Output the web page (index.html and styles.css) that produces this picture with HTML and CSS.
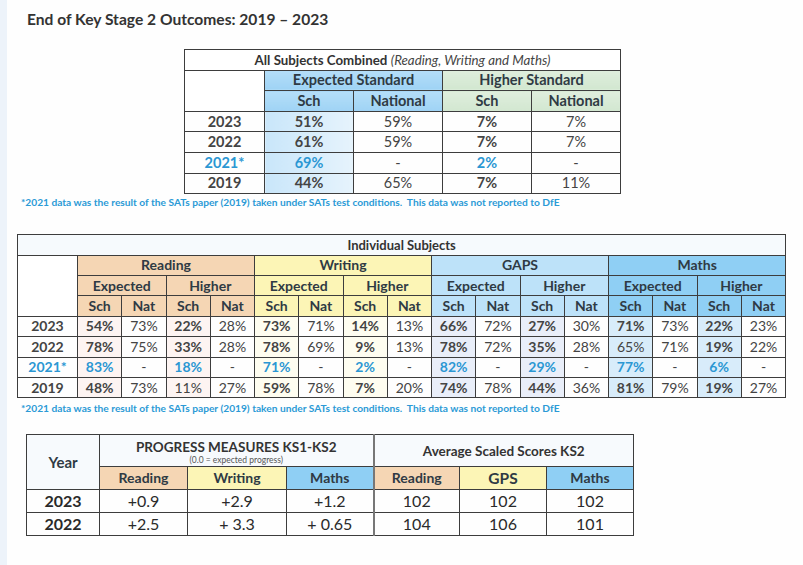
FILE: index.html
```html
<!DOCTYPE html>
<html>
<head>
<meta charset="utf-8">
<link rel="stylesheet" href="styles.css">
</head>
<body>
<div class="page">
  <h1 class="title">End of Key Stage 2 Outcomes: 2019 – 2023</h1>

  <table class="t1">
    <colgroup><col class="c-yr"><col class="c-v"><col class="c-v"><col class="c-v"><col class="c-v"></colgroup>
    <tr><td colspan="5" class="ttl"><b>All Subjects Combined</b> <i>(Reading, Writing and Maths)</i></td></tr>
    <tr><td rowspan="2" class="blank"></td><th colspan="2" class="exp">Expected Standard</th><th colspan="2" class="hig">Higher Standard</th></tr>
    <tr><th class="exp">Sch</th><th class="exp">National</th><th class="hig">Sch</th><th class="hig">National</th></tr>
    <tr><td class="yr">2023</td><td class="b tintb">51%</td><td>59%</td><td class="b">7%</td><td>7%</td></tr>
    <tr><td class="yr">2022</td><td class="b tintb">61%</td><td>59%</td><td class="b">7%</td><td>7%</td></tr>
    <tr class="blue"><td class="yr">2021*</td><td class="b tintb">69%</td><td>-</td><td class="b">2%</td><td>-</td></tr>
    <tr><td class="yr">2019</td><td class="b tintb">44%</td><td>65%</td><td class="b">7%</td><td>11%</td></tr>
  </table>
  <p class="note note1">*2021 data was the result of the SATs paper (2019) taken under SATs test conditions.  This data was not reported to DfE</p>

  <table class="t2">
    <colgroup><col class="c-yr2"><col span="16" class="c-v2"></colgroup>
    <tr><td colspan="17" class="ttl2"><b>Individual Subjects</b></td></tr>
    <tr><td rowspan="3" class="blank"></td>
      <th colspan="4" class="rd">Reading</th><th colspan="4" class="wr">Writing</th><th colspan="4" class="gp">GAPS</th><th colspan="4" class="ma">Maths</th></tr>
    <tr>
      <th colspan="2" class="rd">Expected</th><th colspan="2" class="rd">Higher</th>
      <th colspan="2" class="wr">Expected</th><th colspan="2" class="wr">Higher</th>
      <th colspan="2" class="gp">Expected</th><th colspan="2" class="gp">Higher</th>
      <th colspan="2" class="ma">Expected</th><th colspan="2" class="ma">Higher</th></tr>
    <tr>
      <th class="rd">Sch</th><th class="rd">Nat</th><th class="rd">Sch</th><th class="rd">Nat</th>
      <th class="wr">Sch</th><th class="wr">Nat</th><th class="wr">Sch</th><th class="wr">Nat</th>
      <th class="gp">Sch</th><th class="gp">Nat</th><th class="gp">Sch</th><th class="gp">Nat</th>
      <th class="ma">Sch</th><th class="ma">Nat</th><th class="ma">Sch</th><th class="ma">Nat</th></tr>
    <tr><td class="yr">2023</td>
      <td class="b tr">54%</td><td>73%</td><td class="b tr">22%</td><td>28%</td>
      <td class="b tw">73%</td><td>71%</td><td class="b tw">14%</td><td>13%</td>
      <td class="b tg">66%</td><td>72%</td><td class="b tg">27%</td><td>30%</td>
      <td class="b tm">71%</td><td>73%</td><td class="b tm">22%</td><td>23%</td></tr>
    <tr><td class="yr">2022</td>
      <td class="b tr">78%</td><td>75%</td><td class="b tr">33%</td><td>28%</td>
      <td class="b tw">78%</td><td>69%</td><td class="b tw">9%</td><td>13%</td>
      <td class="b tg">78%</td><td>72%</td><td class="b tg">35%</td><td>28%</td>
      <td class="tm">65%</td><td>71%</td><td class="b tm">19%</td><td>22%</td></tr>
    <tr class="blue"><td class="yr">2021*</td>
      <td class="b tr">83%</td><td>-</td><td class="b tr">18%</td><td>-</td>
      <td class="b tw">71%</td><td>-</td><td class="b tw">2%</td><td>-</td>
      <td class="b tg">82%</td><td>-</td><td class="b tg">29%</td><td>-</td>
      <td class="b tm">77%</td><td>-</td><td class="b tm">6%</td><td>-</td></tr>
    <tr><td class="yr">2019</td>
      <td class="b tr">48%</td><td>73%</td><td class="tr">11%</td><td>27%</td>
      <td class="b tw">59%</td><td>78%</td><td class="b tw">7%</td><td>20%</td>
      <td class="b tg">74%</td><td>78%</td><td class="b tg">44%</td><td>36%</td>
      <td class="b tm">81%</td><td>79%</td><td class="b tm">19%</td><td>27%</td></tr>
  </table>
  <p class="note note2">*2021 data was the result of the SATs paper (2019) taken under SATs test conditions.  This data was not reported to DfE</p>

  <table class="t3">
    <colgroup><col class="w73"><col class="w88"><col class="w99"><col class="w87"><col class="w86"><col class="w87"><col class="w87"></colgroup>
    <tr class="h1">
      <th rowspan="2" class="yearh">Year</th>
      <th colspan="3" class="pm"><span class="pmt">PROGRESS MEASURES KS1-KS2</span><span class="pms">(0.0 = expected progress)</span></th>
      <th colspan="3" class="ass">Average Scaled Scores KS2</th></tr>
    <tr class="h2">
      <th class="rd">Reading</th><th class="wr">Writing</th><th class="ma sep">Maths</th>
      <th class="rd">Reading</th><th class="wr gps">GPS</th><th class="ma">Maths</th></tr>
    <tr class="dr"><td class="yr">2023</td><td>+0.9</td><td>+2.9</td><td class="sep">+1.2</td><td>102</td><td>102</td><td>102</td></tr>
    <tr class="dr"><td class="yr">2022</td><td>+2.5</td><td>+ 3.3</td><td class="sep">+ 0.65</td><td>104</td><td>106</td><td>101</td></tr>
  </table>
</div>
</body>
</html>
```
FILE: styles.css
```css
html, body {
  margin: 0;
  padding: 0;
  background: #fdfdfd;
}
body {
  font-family: Lato, "Liberation Sans", sans-serif;
  color: #2b2b2b;
  width: 803px;
  height: 565px;
  overflow: hidden;
}
.page {
  border-left: 7px solid #edf3fa;
  height: 565px;
  box-sizing: border-box;
  padding-top: 9px;
  background: #fefefe;
}
.title {
  margin: 0 0 0 20px;
  font-size: 15.6px;
  line-height: 20px;
  font-weight: bold;
  color: #333;
}
table {
  border-collapse: collapse;
  table-layout: fixed;
  text-align: center;
}
td, th {
  border: 1px solid #3d3d3d;
  padding: 0;
  white-space: nowrap;
  overflow: hidden;
  line-height: 16px;
}
th { font-weight: bold; color: #2f3a44; }
.b { font-weight: bold; color: #2a2a2a; }
.yr { font-weight: bold; color: #2a2a2a; }
.blue td, .blue td.b, .blue td.yr { color: #2b97d3; }

/* table 1 */
.t1 {
  margin: 20px 0 0 177px;
  width: 436px;
  font-size: 14.5px;
  border: 1px solid #777;
}
.t1 .c-yr { width: 80px; }
.t1 .c-v { width: 89px; }
.t1 tr { height: 20.6px; }
.t1 td { color: #444; }
.t1 .ttl { text-align: center; color: #333; background: #fff; font-size: 13.3px; }
.t1 .ttl b { color: #333; }
.t1 .ttl i { font-weight: normal; color: #444; }
.exp { background: linear-gradient(#b4def8, #9fd3f5); }
.hig { background: linear-gradient(#dfeedd, #d2e7d0); }
.tintb { background: linear-gradient(90deg, #c9e6fa, #e6f3fc); }
.blank { background: #fff; }

.note {
  margin: 0;
  font-size: 10.2px;
  line-height: 12px;
  font-weight: bold;
  color: #2b9ad6;
  white-space: pre;
}
.note1 { margin: 2px 0 0 14px; }
.note2 { margin: 4px 0 0 14px; }

/* table 2 */
.t2 {
  margin: 26px 0 0 10px;
  width: 768px;
  font-size: 14px;
  border: 1px solid #777;
}
.t2 .c-yr2 { width: 60px; }
.t2 .c-v2 { width: 44.25px; }
.t2 tr { height: 20.4px; }
.t2 td { color: #444; }
.ttl2 { background: #f6fafd; font-size: 13px; }
.ttl2 b { color: #333; }
.rd { background: #f5d6b4; }
.wr { background: #fcf5b6; }
.gp { background: #bde2f9; }
.ma { background: #8fcff4; }
.tr { background: #fdf4f2; }
.tw { background: #fefdf0; }
.tg { background: #e9eef9; }
.tm { background: #d8ecfa; }

/* table 3 */
.t3 {
  margin: 20px 0 0 19px;
  width: 607px;
  font-size: 15px;
  border: 1px solid #666;
}
.w73 { width: 73px; }
.w88 { width: 88px; }
.w99 { width: 99px; }
.w87 { width: 87px; }
.w86 { width: 86px; }
.t3 .h1 { height: 32px; }
.t3 .h2 { height: 23px; }
.t3 .dr { height: 23px; }
.t3 .h1 th { background: #f7fafd; }
.yearh { font-size: 15px; background: #f7fafd; }
.pm { vertical-align: top; padding-top: 5px; }
.pmt { display: block; font-size: 13.5px; line-height: 15px; color: #333; }
.pms { display: block; font-size: 8.5px; line-height: 10px; font-weight: normal; color: #555; }
.ass { font-size: 13.5px; color: #333; }
.t3 .h2 th { font-size: 14px; }
.t3 .h2 .gps { font-size: 15.5px; }
.t3 td { font-size: 16px; color: #2a2a2a; }
.t3 .sep, .t3 th.pm { border-right: 2px solid #777; }
```
